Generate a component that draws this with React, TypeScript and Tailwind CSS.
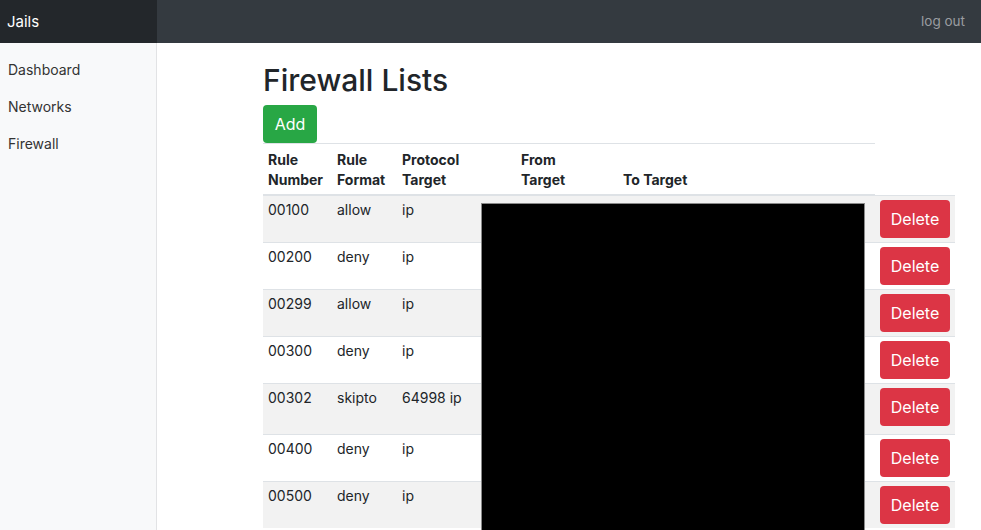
import React from "react";

const rows = [
  { n: "00100", f: "allow", p: "ip" },
  { n: "00200", f: "deny", p: "ip" },
  { n: "00299", f: "allow", p: "ip" },
  { n: "00300", f: "deny", p: "ip" },
  { n: "00302", f: "skipto", p: "64998 ip", tall: true },
  { n: "00400", f: "deny", p: "ip" },
  { n: "00500", f: "deny", p: "ip" },
];

const headers: [string, string][] = [
  ["Rule", "Number"],
  ["Rule", "Format"],
  ["Protocol", "Target"],
  ["From", "Target"],
  ["", "To Target"],
];

export default function App() {
  return (
    <div
      className="w-[981px] h-[530px] overflow-hidden bg-white text-[#212529]"
      style={{ fontFamily: "Inter, 'Noto Sans', sans-serif" }}
    >
      <nav className="flex h-[43px]">
        <div className="w-[157px] bg-[#23272b] px-[7px] flex items-center text-white text-[15px] leading-none">
          Jails
        </div>
        <div className="flex-1 bg-[#343a40] flex items-center justify-end pr-4 text-[13.5px] text-[#9a9da0]">
          log out
        </div>
      </nav>
      <div className="flex h-[487px]">
        <aside className="w-[157px] shrink-0 bg-[#f8f9fa] border-r border-[#e2e3e5] pt-2">
          {["Dashboard", "Networks", "Firewall"].map((l) => (
            <div key={l} className="px-2 py-2 text-[14px] leading-[21px] font-normal text-[#333]">
              {l}
            </div>
          ))}
        </aside>
        <main className="flex-1 pl-[106px] pt-[20px]">
          <h3 className="text-[30px] leading-[34px] font-medium mb-2">Firewall Lists</h3>
          <button className="h-[38px] w-[54px] rounded bg-[#28a745] text-white text-[16px]">Add</button>
          <div className="relative">
            <table className="table-fixed border-collapse text-[14px] leading-[20px] w-[692px]">
              <colgroup>
                <col className="w-[69px]" />
                <col className="w-[65px]" />
                <col className="w-[119px]" />
                <col className="w-[102px]" />
                <col className="w-[257px]" />
                <col className="w-[80px]" />
              </colgroup>
              <thead>
                <tr>
                  {headers.map(([a, b]) => (
                    <th
                      key={a + b}
                      className="text-left align-bottom font-bold px-[5px] pt-[6px] pb-[4px] border-t border-b-2 border-[#dee2e6]"
                    >
                      {a && (
                        <>
                          {a}
                          <br />
                        </>
                      )}
                      {b}
                    </th>
                  ))}
                </tr>
              </thead>
              <tbody>
                {rows.map((r, i) => (
                  <tr key={r.n} className={i % 2 === 0 ? "bg-[#f2f2f2]" : "bg-white"}>
                    <td className={`align-top px-[5px] py-1 border-t border-[#dee2e6] ${r.tall ? "h-[51px]" : "h-[47px]"}`}>{r.n}</td>
                    <td className="align-top px-[5px] py-1 border-t border-[#dee2e6]">{r.f}</td>
                    <td className="align-top px-[5px] py-1 border-t border-[#dee2e6] whitespace-nowrap">{r.p}</td>
                    <td className="align-top px-[5px] py-1 border-t border-[#dee2e6]"></td>
                    <td className="align-top px-[5px] py-1 border-t border-[#dee2e6]"></td>
                    <td className="align-top px-[5px] py-1 border-t border-[#dee2e6]">
                      <button className="w-[70px] h-[38px] rounded bg-[#dc3545] text-white text-[16px]">Delete</button>
                    </td>
                  </tr>
                ))}
              </tbody>
            </table>
            <div className="absolute left-[218px] top-[60px] w-[384px] h-[420px] bg-black border border-[#8a8a8a]" />
          </div>
        </main>
      </div>
    </div>
  );
}
